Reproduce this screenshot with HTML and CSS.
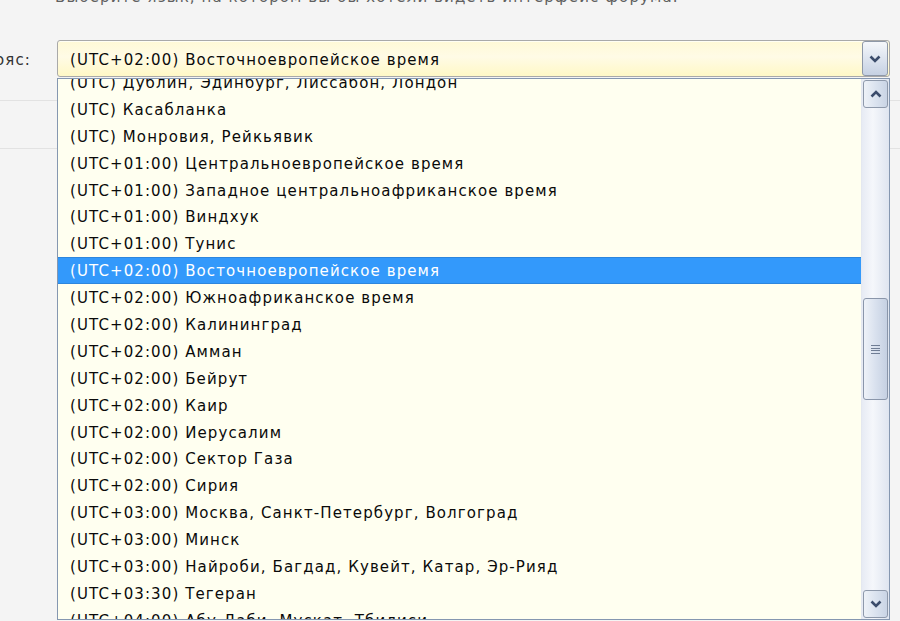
FILE: index.html
```html
<!DOCTYPE html>
<html lang="ru">
<head>
    <meta charset="UTF-8">
    <title>Настройки форума</title>
    <link rel="stylesheet" href="styles.css">
</head>
<body>

<div class="form">
    <div class="form-row lang-row">
        <p class="hint">Выберите язык, на котором вы бы хотели видеть интерфейс форума.</p>
    </div>

    <div class="form-row tz-row">
        <div class="label"><span>Часовой пояс:</span></div>
        <div class="field">
            <div class="combo">
                <span class="combo-text">(UTC+02:00) Восточноевропейское время</span>
                <span class="combo-button">
                    <svg width="12" height="8" viewBox="0 0 12 8"><polyline points="1.5,1.5 6,6 10.5,1.5" fill="none" stroke="#3b4c6b" stroke-width="2.6"/></svg>
                </span>
            </div>

            <div class="dropdown">
                <div class="options">
                    <div class="list">
                        <div class="option">(UTC) Дублин, Эдинбург, Лиссабон, Лондон</div>
                        <div class="option">(UTC) Касабланка</div>
                        <div class="option">(UTC) Монровия, Рейкьявик</div>
                        <div class="option">(UTC+01:00) Центральноевропейское время</div>
                        <div class="option">(UTC+01:00) Западное центральноафриканское время</div>
                        <div class="option">(UTC+01:00) Виндхук</div>
                        <div class="option">(UTC+01:00) Тунис</div>
                        <div class="option selected">(UTC+02:00) Восточноевропейское время</div>
                        <div class="option">(UTC+02:00) Южноафриканское время</div>
                        <div class="option">(UTC+02:00) Калининград</div>
                        <div class="option">(UTC+02:00) Амман</div>
                        <div class="option">(UTC+02:00) Бейрут</div>
                        <div class="option">(UTC+02:00) Каир</div>
                        <div class="option">(UTC+02:00) Иерусалим</div>
                        <div class="option">(UTC+02:00) Сектор Газа</div>
                        <div class="option">(UTC+02:00) Сирия</div>
                        <div class="option">(UTC+03:00) Москва, Санкт-Петербург, Волгоград</div>
                        <div class="option">(UTC+03:00) Минск</div>
                        <div class="option">(UTC+03:00) Найроби, Багдад, Кувейт, Катар, Эр-Рияд</div>
                        <div class="option">(UTC+03:30) Тегеран</div>
                        <div class="option">(UTC+04:00) Абу-Даби, Мускат, Тбилиси</div>
                    </div>
                </div>
                <div class="scrollbar">
                    <span class="scroll-btn">
                        <svg width="12" height="8" viewBox="0 0 12 8"><polyline points="1.5,6.5 6,2 10.5,6.5" fill="none" stroke="#3b4c6b" stroke-width="2.6"/></svg>
                    </span>
                    <div class="track">
                        <div class="thumb"><span class="grip"></span></div>
                    </div>
                    <span class="scroll-btn">
                        <svg width="12" height="8" viewBox="0 0 12 8"><polyline points="1.5,1.5 6,6 10.5,1.5" fill="none" stroke="#3b4c6b" stroke-width="2.6"/></svg>
                    </span>
                </div>
            </div>
        </div>
    </div>

    <div class="form-row empty-row"></div>
</div>

</body>
</html>
```

FILE: styles.css
```css
body {
    margin: 0;
    background-color: #f4f4f4;
    font-family: "DejaVu Sans", Verdana, sans-serif;
    font-size: 15px;
    letter-spacing: 1.1px;
    color: #0a0a0a;
    height: 621px;
    overflow: hidden;
}
.form {
    display: flex;
    flex-direction: column;
}
.form-row {
    border-bottom: 1px solid #e2e2e2;
}
.lang-row {
    height: 0;
    border-bottom: none;
}
.hint {
    margin: -12px 0 0 55px;
    color: #606060;
    white-space: nowrap;
}
.tz-row {
    display: flex;
    height: 100px;
}
/* label is cut off by the left edge of the screenshot */
.label {
    width: 57px;
    display: flex;
    justify-content: flex-end;
    overflow: hidden;
    white-space: nowrap;
    padding-top: 51px;
    color: #333;
}
.label span {
    margin-right: 26px;
}
.field {
    position: relative;
    width: 833px;
    padding-top: 40px;
}
.combo {
    display: flex;
    align-items: center;
    height: 35px;
    border: 1px solid #a9a9a9;
    border-radius: 3px;
    background: linear-gradient(#fff9d6, #fffbe6 45%, #fff8c6);
    box-shadow: inset 0 1px 0 #fffef4;
}
.combo-text {
    flex: 1;
    padding-left: 12px;
    padding-top: 2px;
}
.combo-button {
    width: 24px;
    height: 33px;
    margin-right: 1px;
    display: flex;
    align-items: center;
    justify-content: center;
    border: 1px solid #8e98a8;
    border-radius: 3px;
    background: linear-gradient(#f5f7fb, #dde4ef 50%, #c6d1e3);
}
/* open list over the rows below */
.dropdown {
    position: absolute;
    top: 78px;
    left: 0;
    width: 831px;
    height: 540px;
    display: flex;
    border: 1px solid #8597b0;
    background-color: #fffff0;
}
.options {
    flex: 1;
    overflow: hidden;
}
.list {
    margin-top: -10px;
}
.option {
    height: 26.9px;
    line-height: 28px;
    padding-left: 12px;
    white-space: nowrap;
}
.option.selected {
    background-color: #3399fb;
    color: #fff;
    box-shadow: inset 0 1px 0 #2d86dd, inset 0 -1px 0 #2d86dd;
}
.scrollbar {
    width: 27px;
    display: flex;
    flex-direction: column;
    background: linear-gradient(to right, #e7ebf4, #f5f7fb 40%, #dfe5f0);
    border-left: 1px solid #e4e8f0;
}
.scroll-btn {
    height: 26px;
    margin: 1px;
    display: flex;
    align-items: center;
    justify-content: center;
    border: 1px solid #8e99ab;
    border-radius: 3px;
    background: linear-gradient(to right, #eef2f8, #dbe3ef 50%, #c9d4e5);
}
.track {
    flex: 1;
    padding-top: 189px;
}
.thumb {
    height: 100px;
    margin: 0 1px;
    display: flex;
    align-items: center;
    justify-content: center;
    border: 1px solid #8a96aa;
    border-radius: 3px;
    background: linear-gradient(to right, #eef2f8, #d9e1ee 50%, #c5d0e2);
}
.grip {
    width: 9px;
    height: 9px;
    background: repeating-linear-gradient(#6f7d94 0 1px, transparent 1px 2.5px);
}
.empty-row {
    height: 47px;
}
```
